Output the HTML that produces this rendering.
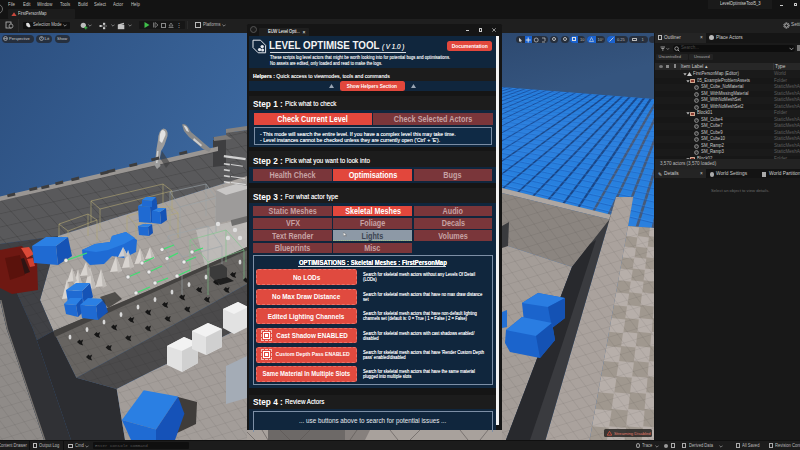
<!DOCTYPE html>
<html><head><meta charset="utf-8">
<style>
*{margin:0;padding:0;box-sizing:border-box}
html,body{width:800px;height:450px;overflow:hidden;background:#111;font-family:"Liberation Sans",sans-serif;color:#ddd}
.a{position:absolute}
.t{position:absolute;white-space:nowrap;line-height:1}
.mn{position:absolute;top:1.6px;font-size:4.7px;color:#c4c4c4;line-height:5px;transform:scaleX(.92);transform-origin:0 50%}
.pill{position:absolute;height:8px;border-radius:4px;background:rgba(36,40,48,0.82);font-size:4.5px;color:#ddd;line-height:8px}
.ot{position:absolute;font-size:4.8px;line-height:6px;color:#c8c8c8;white-space:nowrap;transform:scaleX(.9);transform-origin:0 50%}
.ty{position:absolute;left:774px;font-size:4.6px;line-height:6px;color:#5e5e5e;white-space:nowrap}
.ico{position:absolute;width:4px;height:4px;border-radius:50%;border:0.8px solid #aaa}
.sec{position:absolute;left:249px;width:247px;background:#1c1c1c}
.nav{position:absolute;left:250px;width:246px;background:#10263d}
.st{position:absolute;left:253px;font-size:9px;font-weight:bold;color:#fff;line-height:10px;white-space:nowrap}
.st span{font-size:5.6px;font-weight:normal;color:#e8e8e8}
.b{position:absolute;height:11px;font-size:6.2px;font-weight:bold;text-align:center;line-height:11px;color:#b48a8c;background:#7a363a;white-space:nowrap}
.on{background:#e2473c;color:#fff}
.ob{position:absolute;left:256px;width:101px;height:16px;border-radius:2.5px;background:#e04a3f;color:#fff;font-size:6.1px;font-weight:bold;text-align:center;line-height:16px;white-space:nowrap;outline:0.6px dashed rgba(255,180,170,0.35);outline-offset:-1px}
.od{position:absolute;left:363px;font-size:4.3px;line-height:5.2px;color:#d8dde4;white-space:nowrap}
</style></head><body>

<!-- ===== top chrome ===== -->
<div class="a" style="left:0;top:0;width:800px;height:18.5px;background:#131313"></div>
<div class="a" style="left:-7px;top:4px;width:10px;height:10px;border-radius:50%;border:0.9px solid #6e6e6e"></div>
<div class="mn" style="left:8px">File</div>
<div class="mn" style="left:22.5px">Edit</div>
<div class="mn" style="left:37px">Window</div>
<div class="mn" style="left:59.5px">Tools</div>
<div class="mn" style="left:78px">Build</div>
<div class="mn" style="left:94px">Select</div>
<div class="mn" style="left:113px">Actor</div>
<div class="mn" style="left:131px">Help</div>
<div class="a" style="left:8px;top:8.5px;width:67px;height:10px;background:#1c1c1c;border-radius:1px"></div>
<svg class="a" style="left:10.5px;top:11.8px" width="6" height="4.5"><polygon points="3,0.3 5.6,4 0.4,4" fill="#c8483c"/></svg>
<div class="t" style="left:18px;top:12px;font-size:4.6px;color:#d4d4d4;transform:scaleX(.88);transform-origin:0 50%">FirstPersonMap</div>
<div class="a" style="left:708px;top:0;width:64px;height:8.5px;background:#1a1a1a"></div>
<div class="t" style="left:720px;top:2.3px;font-size:4.7px;color:#d8d8d8;transform:scaleX(.88);transform-origin:0 50%">LevelOptimiseTool5_3</div>
<div class="a" style="left:780px;top:4.5px;width:3px;height:0.8px;background:#ccc"></div>
<div class="a" style="left:793.5px;top:2.8px;width:3.5px;height:3.5px;border:0.7px solid #ccc;border-radius:0.6px"></div>
<!-- toolbar -->
<div class="a" style="left:0;top:18.5px;width:800px;height:14px;background:#1f1f1f"></div>
<svg class="a" style="left:5px;top:21px" width="9" height="8"><rect x="1" y="1" width="5" height="6" fill="none" stroke="#bbb" stroke-width="0.8"/><circle cx="6" cy="5" r="2" fill="#1f1f1f" stroke="#bbb" stroke-width="0.7"/></svg><div class="a" style="left:18px;top:19px;width:0.8px;height:13px;background:#2a2a2a"></div>
<div class="a" style="left:23px;top:21.5px;width:47px;height:7.5px;background:#101010;border-radius:1px"></div>
<svg class="a" style="left:24.5px;top:22.2px" width="6" height="6"><path d="M1 1.5Q3 0 4.5 2L5.5 4.5L4 5.5L1.5 4Z" fill="#e0e0e0"/></svg>
<div class="t" style="left:32.5px;top:23.2px;font-size:4.6px;color:#ccc;transform:scaleX(.9);transform-origin:0 50%">Selection Mode</div><svg class="a" style="left:63px;top:24px" width="4" height="3"><path d="M0.4 0.6L2 2.2L3.6 0.6" stroke="#ccc" stroke-width="0.6" fill="none"/></svg>
<svg class="a" style="left:79.5px;top:21.5px" width="8" height="8"><circle cx="3.3" cy="3.3" r="2.6" fill="#bdbdbd"/><path d="M5.8 4.2V7.4M4.2 5.8H7.4" stroke="#3fbf4a" stroke-width="1"/></svg>
<svg class="a" style="left:88px;top:24px" width="4" height="3"><path d="M0.4 0.6L2 2.2L3.6 0.6" stroke="#bbb" stroke-width="0.6" fill="none"/></svg>
<svg class="a" style="left:98.5px;top:21.5px" width="10" height="8"><rect x="0.5" y="3" width="2.2" height="2" fill="#ccc"/><rect x="4" y="0.8" width="2.2" height="2" fill="#ccc"/><rect x="4" y="5.2" width="2.2" height="2" fill="#ccc"/><path d="M2.7 4H4M5.1 2.8V5.2M6.2 4H8" stroke="#ccc" stroke-width="0.6"/></svg>
<svg class="a" style="left:111px;top:24px" width="4" height="3"><path d="M0.4 0.6L2 2.2L3.6 0.6" stroke="#bbb" stroke-width="0.6" fill="none"/></svg>
<svg class="a" style="left:116.5px;top:21.5px" width="9" height="8"><rect x="0.8" y="3" width="6.5" height="4.2" fill="#c4c4c4"/><path d="M0.8 2.6L6.8 0.8L7.2 2.2L1.2 3.8Z" fill="#c4c4c4"/></svg>
<svg class="a" style="left:128px;top:24px" width="4" height="3"><path d="M0.4 0.6L2 2.2L3.6 0.6" stroke="#bbb" stroke-width="0.6" fill="none"/></svg>
<div class="a" style="left:139px;top:21px;width:46px;height:8px;background:#161616;border-radius:1px"></div>
<svg class="a" style="left:144px;top:22px" width="6" height="6"><polygon points="0.5,0 5.5,3 0.5,6" fill="#3fbf4a"/></svg>
<svg class="a" style="left:153px;top:22px" width="6" height="6"><path d="M0.5 0.5V5.5M2 0.5L5 3L2 5.5Z" fill="none" stroke="#888" stroke-width="0.8"/></svg>
<div class="a" style="left:161px;top:22.5px;width:4.5px;height:5px;border:0.8px solid #888"></div>
<svg class="a" style="left:168px;top:22px" width="6" height="6"><path d="M0.5 5.5H5.5M1 4L3 1L5 4Z" fill="none" stroke="#888" stroke-width="0.8"/></svg>
<div class="t" style="left:176px;top:21.5px;font-size:6px;color:#aaa;line-height:7px">⋮</div>
<div class="a" style="left:187px;top:21px;width:1px;height:8px;background:#2a2a2a"></div>
<div class="a" style="left:195px;top:22px;width:6px;height:6px;border:0.9px solid #bbb"></div>
<div class="t" style="left:203px;top:23.2px;font-size:4.6px;color:#bbb;transform:scaleX(.9);transform-origin:0 50%">Platforms</div><svg class="a" style="left:222px;top:24px" width="4" height="3"><path d="M0.4 0.6L2 2.2L3.6 0.6" stroke="#bbb" stroke-width="0.6" fill="none"/></svg>
<svg class="a" style="left:782.5px;top:22px" width="7" height="7"><circle cx="3.5" cy="3.5" r="1.8" fill="none" stroke="#ccc" stroke-width="0.9"/><circle cx="3.5" cy="3.5" r="2.8" fill="none" stroke="#ccc" stroke-width="0.8" stroke-dasharray="1 0.8"/></svg>
<div class="t" style="left:791px;top:23.2px;font-size:4.7px;color:#bbb">Settings</div>

<svg class="a" style="left:0;top:33px" width="655" height="407" viewBox="0 33 655 407">
<defs>
<linearGradient id="sky" gradientUnits="userSpaceOnUse" x1="0" y1="40" x2="260" y2="200">
<stop offset="0" stop-color="#2c4f7f"/><stop offset="1" stop-color="#3f6ca4"/>
</linearGradient>
<linearGradient id="sky2" gradientUnits="userSpaceOnUse" x1="502" y1="33" x2="520" y2="100">
<stop offset="0" stop-color="#2d4970"/><stop offset="1" stop-color="#35557f"/>
</linearGradient>
<pattern id="grid" width="10" height="10" patternUnits="userSpaceOnUse" patternTransform="rotate(-17) skewX(20)">
<path d="M0 0H10M0 0V10" stroke="#000" stroke-opacity="0.16" stroke-width="0.7" fill="none"/>
</pattern>
<pattern id="cubes" width="9" height="7" patternUnits="userSpaceOnUse" patternTransform="rotate(8) skewX(-30)">
<rect width="9" height="7" fill="#1b55a8"/>
<rect x="0.5" y="0.5" width="7.5" height="4.5" fill="#2d7fe0"/>
<rect x="0.5" y="4.2" width="7.5" height="1.8" fill="#1d63c4"/>
</pattern>
<pattern id="wgrid" width="14.5" height="13" patternUnits="userSpaceOnUse" patternTransform="translate(0,200) rotate(-12.6) skewX(30)">
<path d="M0 0.5H14.5M0.5 0V13" stroke="#2e2e30" stroke-opacity="0.38" stroke-width="0.7" fill="none"/>
</pattern>
</defs>
<rect x="0" y="33" width="655" height="407" fill="url(#sky)"/>
<rect x="502" y="33" width="153" height="120" fill="url(#sky2)"/>
<!-- LEFT SECTION -->
<!-- far wall face -->
<polygon points="0,199 218,149 213,137 229,141 226,131 247,133 247,176 219,185 175,199 58,236 0,244" fill="#59595b"/>
<polygon points="0,199 218,149 213,137 229,141 226,131 247,133 247,176 219,185 175,199 58,236 0,244" fill="url(#wgrid)"/>
<polygon points="213,140 231,138 231,165 213,167" fill="#3e3e40"/>
<polygon points="226,133 247,130 247,196 226,190" fill="#5a5a5c"/><polygon points="226,133 247,130 247,196 226,190" fill="url(#wgrid)"/>
<polygon points="214,137 226,135 232,139 214,141" fill="#7d7a78"/>
<polygon points="226,129 247,126 247,130 226,133" fill="#85827f"/>
<!-- wall top ledge -->
<polygon points="0,196.4 218,146.4 218,151 0,201" fill="#9a9693"/>
<!-- floor light -->
<polygon points="58,236 175,199 219,185 247,176 247,249 150,292 53.3,331 40,300" fill="#a8a39f"/>
<polygon points="58,236 175,199 219,185 247,176 247,249 150,292 53.3,331 40,300" fill="url(#grid)"/>
<polygon points="196,230 247,218 247,249 205,266" fill="#c2bfbd" opacity="0.8"/><polygon points="229,213 247,208 247,222 232,226" fill="#6f6e6d"/>
<!-- left shadow floor -->
<polygon points="0,244 58,236 40,300 53.3,331 37,340 33,329 13,284 0,284" fill="#404145"/>
<polygon points="0,244 58,236 40,300 53.3,331 37,340 33,329 13,284 0,284" fill="url(#grid)"/>
<!-- bottom-left light floor -->
<polygon points="0,300 6.7,329 44,440 0,440" fill="#8f8b88"/>
<polygon points="0,300 6.7,329 44,440 0,440" fill="url(#grid)"/>
<!-- left wall band -->
<polygon points="0,284 13,284 33,329 71,440 44,440 6.7,329 0,300" fill="#303135"/>
<polygon points="0,300 1.5,300 8,329 45.5,440 44,440 6.7,329" fill="#77736f"/>
<!-- deep shadow -->
<polygon points="37,340 53.3,331 76.4,377.7 116.7,388.9 125,440 71,440 33,329" fill="#2c2d31"/>
<!-- platform top -->
<polygon points="53.3,331 150,290 247,247 247,284 150,338 76.4,377.7" fill="#676461"/>
<polygon points="53.3,331 150,290 247,247 247,284 150,338 76.4,377.7" fill="url(#grid)"/>
<polygon points="53.3,331 150,290 247,247 247,250.5 150,294 55,337" fill="#444240"/>
<!-- platform front face -->
<polygon points="76.4,377.7 150,338 247,284 247,325 150,372 130,382 116.7,388.9" fill="#4b4a4b"/>
<polygon points="76.4,377.7 150,338 247,284 247,325 150,372 130,382 116.7,388.9" fill="url(#grid)"/>
<!-- floor right of platform -->
<polygon points="116.7,388.9 150,372 247,325 247,440 125,440" fill="#a39d99"/>
<polygon points="116.7,388.9 150,372 247,325 247,440 125,440" fill="url(#grid)"/>

<!-- white cubes -->
<polygon points="167,346 184,337 198,343 198,363 182,372 167,365" fill="#e2e2e2"/>
<polygon points="167,346 184,337 198,343 182,351" fill="#f2f2f2"/>
<polygon points="182,351 198,343 198,363 182,372" fill="#d0d0d0"/>
<polygon points="192,331 208,323 222,329 222,347 206,355 192,349" fill="#e2e2e2"/>
<polygon points="192,331 208,323 222,329 206,337" fill="#f2f2f2"/>
<polygon points="206,337 222,329 222,347 206,355" fill="#d0d0d0"/>
<polygon points="223,309 238,302 248,307 248,327 234,334 223,328" fill="#e2e2e2"/>
<polygon points="223,309 238,302 248,307 234,314" fill="#f2f2f2"/>
<!-- big blue cube bottom -->
<polygon points="178,397 197,402 196,424 175,434" fill="#3f3c3a"/>
<polygon points="121.9,420 143.75,390.3 178,396.6 156,429.4" fill="#2a7fe3"/>
<polygon points="121.9,420 156,429.4 156,440 131,440" fill="#1f6bd3"/>
<polygon points="156,429.4 178,396.6 184.4,413.75 175,440 156,440" fill="#1552b8"/>
<polygon points="0,250 22,246 37,262 38,290 12,294 0,288" fill="#6e1812"/>
<polygon points="8,262 24,258 30,272 14,278" fill="#1e1414" opacity="0.8"/>
<polygon points="5,258 20,255 25,275 10,280" fill="#5a120c"/>
<polygon points="21,248 29,247 34,254 27,258" fill="#dc4a38"/>
<polygon points="27,259 33,258 35,266 30,267" fill="#d04030"/>
<path d="M59 224L88 214L97 220L68 231Z M59 224V246 M88 214V236 M97 220V241 M68 231V253" stroke="#b3a874" stroke-width="0.6" fill="none"/>
<path d="M91 201L163 184L172 191L100 209Z M91 201V222 M163 184V205 M172 191V212 M100 209V231" stroke="#b3a874" stroke-width="0.6" fill="none"/>
<path d="M127 216L170 206L178 213L136 224Z M127 216V240 M170 206V230 M178 213V238 M136 224V250" stroke="#b3a874" stroke-width="0.6" fill="none"/>
<path d="M170 192L206 184L216 198L180 207Z M170 192V226 M206 184V216 M216 198V232 M180 207V240" stroke="#9aa4aa" stroke-width="0.6" fill="none"/>
<path d="M168 236L208 226L222 246L182 257Z M168 236V272 M208 226V260 M222 246V282 M182 257V295" stroke="#9aa4aa" stroke-width="0.6" fill="none"/>
<path d="M190 240L226 230L244 250L208 262Z M190 240V272 M226 230V262 M244 250V280 M208 262V295" stroke="#78c888" stroke-width="0.6" fill="none"/>
<polygon points="56,246 68,237 72,256 58,265" fill="#1553b6"/>
<polygon points="32,246 56,246 58,265 34,263" fill="#1f6ad2"/>
<polygon points="32,246 46,237 68,237 56,246" fill="#2b80e4"/>
<polygon points="82,250 95,244 110,242 112,236 126,232 137,240 136,252 124,258 112,256 104,264 90,265 83,258" fill="#1f6bd4"/>
<polygon points="82,250 95,244 110,242 112,236 126,232 135,238 124,244 108,250 96,252" fill="#2a7fe3"/>
<polygon points="150,207 157,202 158,218 151,223" fill="#1553b6"/>
<polygon points="138,206 150,207 151,223 139,222" fill="#1f6ad2"/>
<polygon points="138,206 146,201 157,202 150,207" fill="#2b80e4"/>
<polygon points="152,201 156,197 157,202 152,207" fill="#1553b6"/>
<polygon points="142,200 152,201 152,207 142,206" fill="#1f6ad2"/>
<polygon points="142,200 146,197 156,197 152,201" fill="#2b80e4"/>
<polygon points="160,212 166,208 167,220 161,224" fill="#1553b6"/>
<polygon points="152,211 160,212 161,224 152,223" fill="#1f6ad2"/>
<polygon points="152,211 158,208 166,208 160,212" fill="#2b80e4"/>
<polygon points="148,227 152,224 153,233 149,236" fill="#1553b6"/>
<polygon points="138,226 148,227 149,236 139,235" fill="#1f6ad2"/>
<polygon points="138,226 143,224 152,224 148,227" fill="#2b80e4"/>
<polygon points="62.0,299.0 67.0,279.0 72.0,298.0" fill="#dcd8d4" opacity="0.92"/>
<polygon points="67.0,279.0 72.0,298.0 68.5,300.0" fill="#bdb8b4" opacity="0.9"/>
<polygon points="72.0,293.0 78.0,269.0 84.0,292.0" fill="#dcd8d4" opacity="0.92"/>
<polygon points="78.0,269.0 84.0,292.0 79.8,294.0" fill="#bdb8b4" opacity="0.9"/>
<polygon points="84.0,289.0 90.0,267.0 96.0,288.0" fill="#dcd8d4" opacity="0.92"/>
<polygon points="90.0,267.0 96.0,288.0 91.8,290.0" fill="#bdb8b4" opacity="0.9"/>
<polygon points="95.5,287.0 101.0,269.0 106.5,286.0" fill="#dcd8d4" opacity="0.92"/>
<polygon points="101.0,269.0 106.5,286.0 102.7,288.0" fill="#bdb8b4" opacity="0.9"/>
<polygon points="67.0,282.0 72.0,268.0 77.0,281.0" fill="#dcd8d4" opacity="0.92"/>
<polygon points="72.0,268.0 77.0,281.0 73.5,283.0" fill="#bdb8b4" opacity="0.9"/>
<polygon points="80.0,276.0 86.0,262.0 92.0,275.0" fill="#dcd8d4" opacity="0.92"/>
<polygon points="86.0,262.0 92.0,275.0 87.8,277.0" fill="#bdb8b4" opacity="0.9"/>
<polygon points="110.0,272.0 116.0,256.0 122.0,271.0" fill="#dcd8d4" opacity="0.92"/>
<polygon points="116.0,256.0 122.0,271.0 117.8,273.0" fill="#bdb8b4" opacity="0.9"/>
<polygon points="122.0,268.0 128.0,250.0 134.0,267.0" fill="#dcd8d4" opacity="0.92"/>
<polygon points="128.0,250.0 134.0,267.0 129.8,269.0" fill="#bdb8b4" opacity="0.9"/>
<polygon points="134.5,264.0 140.0,248.0 145.5,263.0" fill="#dcd8d4" opacity="0.92"/>
<polygon points="140.0,248.0 145.5,263.0 141.7,265.0" fill="#bdb8b4" opacity="0.9"/>
<polygon points="145.0,259.0 150.0,247.0 155.0,258.0" fill="#dcd8d4" opacity="0.92"/>
<polygon points="150.0,247.0 155.0,258.0 151.5,260.0" fill="#bdb8b4" opacity="0.9"/>
<polygon points="118.0,257.0 123.0,247.0 128.0,256.0" fill="#dcd8d4" opacity="0.92"/>
<polygon points="123.0,247.0 128.0,256.0 124.5,258.0" fill="#bdb8b4" opacity="0.9"/>
<polygon points="82,291 90,283 93,297 84,306" fill="#1553b6"/>
<polygon points="66,290 82,291 84,306 68,303" fill="#1f6ad2"/>
<polygon points="66,290 76,283 90,283 82,291" fill="#2b80e4"/>
<polygon points="76,305 82,298 84,311 78,317" fill="#1553b6"/>
<polygon points="64,304 76,305 78,317 66,314" fill="#1f6ad2"/>
<polygon points="64,304 70,298 82,298 76,305" fill="#2b80e4"/>
<polygon points="96,306 104,299 108,312 98,320" fill="#1553b6"/>
<polygon points="80,305 96,306 98,320 82,318" fill="#1f6ad2"/>
<polygon points="80,305 88,298 104,299 96,306" fill="#2b80e4"/>
<polygon points="100,297 115,292 122,299 108,308" fill="#3a3836" opacity="0.8"/>
<line x1="66" y1="260.5" x2="87" y2="253" stroke="#3ee070" stroke-width="1.3"/>
<circle cx="66" cy="260.5" r="2" fill="#ececec" stroke="#777" stroke-width="0.4"/>
<line x1="142" y1="263" x2="154" y2="257.5" stroke="#3ee070" stroke-width="1.3"/>
<circle cx="142" cy="263" r="2" fill="#ececec" stroke="#777" stroke-width="0.4"/>
<line x1="162" y1="249.6" x2="174" y2="245" stroke="#3ee070" stroke-width="1.3"/>
<circle cx="162" cy="249.6" r="2" fill="#ececec" stroke="#777" stroke-width="0.4"/>
<line x1="167" y1="258.4" x2="178" y2="253" stroke="#3ee070" stroke-width="1.3"/>
<circle cx="167" cy="258.4" r="2" fill="#ececec" stroke="#777" stroke-width="0.4"/>
<line x1="128" y1="277" x2="140" y2="272" stroke="#3ee070" stroke-width="1.3"/>
<circle cx="128" cy="277" r="2" fill="#ececec" stroke="#777" stroke-width="0.4"/>
<line x1="149" y1="272" x2="162" y2="266" stroke="#3ee070" stroke-width="1.3"/>
<circle cx="149" cy="272" r="2" fill="#ececec" stroke="#777" stroke-width="0.4"/>
<line x1="155" y1="283" x2="168" y2="278" stroke="#3ee070" stroke-width="1.3"/>
<circle cx="155" cy="283" r="2" fill="#ececec" stroke="#777" stroke-width="0.4"/>
<line x1="177" y1="276" x2="190" y2="270" stroke="#3ee070" stroke-width="1.3"/>
<circle cx="177" cy="276" r="2" fill="#ececec" stroke="#777" stroke-width="0.4"/>
<line x1="184" y1="262" x2="196" y2="257" stroke="#3ee070" stroke-width="1.3"/>
<circle cx="184" cy="262" r="2" fill="#ececec" stroke="#777" stroke-width="0.4"/>
<line x1="192" y1="252" x2="203" y2="248" stroke="#3ee070" stroke-width="1.3"/>
<circle cx="192" cy="252" r="2" fill="#ececec" stroke="#777" stroke-width="0.4"/>
<line x1="136" y1="293" x2="150" y2="287" stroke="#3ee070" stroke-width="1.3"/>
<circle cx="136" cy="293" r="2" fill="#ececec" stroke="#777" stroke-width="0.4"/>
<ellipse cx="70.0" cy="337.0" rx="1.4" ry="2.6" fill="#d8d8d8"/>
<path d="M77.0 342.0l2.5 -2.5l1.2 1.2l2.5 -1.2l-1.2 3.5l1.2 2.5l-3.7 -1.2z" fill="#151515"/>
<ellipse cx="87.0" cy="329.5" rx="1.4" ry="2.6" fill="#d8d8d8"/>
<path d="M94.0 334.5l2.5 -2.5l1.2 1.2l2.5 -1.2l-1.2 3.5l1.2 2.5l-3.7 -1.2z" fill="#151515"/>
<ellipse cx="104.0" cy="322.0" rx="1.4" ry="2.6" fill="#d8d8d8"/>
<path d="M111.0 327.0l2.5 -2.5l1.2 1.2l2.5 -1.2l-1.2 3.5l1.2 2.5l-3.7 -1.2z" fill="#151515"/>
<ellipse cx="121.0" cy="314.5" rx="1.4" ry="2.6" fill="#d8d8d8"/>
<path d="M128.0 319.5l2.5 -2.5l1.2 1.2l2.5 -1.2l-1.2 3.5l1.2 2.5l-3.7 -1.2z" fill="#151515"/>
<ellipse cx="138.0" cy="307.0" rx="1.4" ry="2.6" fill="#d8d8d8"/>
<path d="M145.0 312.0l2.5 -2.5l1.2 1.2l2.5 -1.2l-1.2 3.5l1.2 2.5l-3.7 -1.2z" fill="#151515"/>
<ellipse cx="155.0" cy="299.5" rx="1.4" ry="2.6" fill="#d8d8d8"/>
<path d="M162.0 304.5l2.5 -2.5l1.2 1.2l2.5 -1.2l-1.2 3.5l1.2 2.5l-3.7 -1.2z" fill="#151515"/>
<ellipse cx="172.0" cy="292.0" rx="1.4" ry="2.6" fill="#d8d8d8"/>
<path d="M179.0 297.0l2.5 -2.5l1.2 1.2l2.5 -1.2l-1.2 3.5l1.2 2.5l-3.7 -1.2z" fill="#151515"/>
<ellipse cx="189.0" cy="284.5" rx="1.4" ry="2.6" fill="#d8d8d8"/>
<path d="M196.0 289.5l2.5 -2.5l1.2 1.2l2.5 -1.2l-1.2 3.5l1.2 2.5l-3.7 -1.2z" fill="#151515"/>
<ellipse cx="206.0" cy="277.0" rx="1.4" ry="2.6" fill="#d8d8d8"/>
<path d="M213.0 282.0l2.5 -2.5l1.2 1.2l2.5 -1.2l-1.2 3.5l1.2 2.5l-3.7 -1.2z" fill="#151515"/>
<ellipse cx="223.0" cy="269.5" rx="1.4" ry="2.6" fill="#d8d8d8"/>
<path d="M230.0 274.5l2.5 -2.5l1.2 1.2l2.5 -1.2l-1.2 3.5l1.2 2.5l-3.7 -1.2z" fill="#151515"/>
<ellipse cx="240.0" cy="262.0" rx="1.4" ry="2.6" fill="#d8d8d8"/>
<path d="M247.0 267.0l2.5 -2.5l1.2 1.2l2.5 -1.2l-1.2 3.5l1.2 2.5l-3.7 -1.2z" fill="#151515"/>
<path d="M86.0 357.0l2.5 -2.5l1.2 1.2l2.5 -1.2l-1.2 3.5l1.2 2.5l-3.7 -1.2z" fill="#181818"/>
<path d="M105.6 347.4l2.5 -2.5l1.2 1.2l2.5 -1.2l-1.2 3.5l1.2 2.5l-3.7 -1.2z" fill="#181818"/>
<path d="M125.2 337.8l2.5 -2.5l1.2 1.2l2.5 -1.2l-1.2 3.5l1.2 2.5l-3.7 -1.2z" fill="#181818"/>
<path d="M144.9 328.1l2.5 -2.5l1.2 1.2l2.5 -1.2l-1.2 3.5l1.2 2.5l-3.7 -1.2z" fill="#181818"/>
<path d="M164.5 318.5l2.5 -2.5l1.2 1.2l2.5 -1.2l-1.2 3.5l1.2 2.5l-3.7 -1.2z" fill="#181818"/>
<path d="M184.1 308.9l2.5 -2.5l1.2 1.2l2.5 -1.2l-1.2 3.5l1.2 2.5l-3.7 -1.2z" fill="#181818"/>
<path d="M203.8 299.2l2.5 -2.5l1.2 1.2l2.5 -1.2l-1.2 3.5l1.2 2.5l-3.7 -1.2z" fill="#181818"/>
<path d="M223.4 289.6l2.5 -2.5l1.2 1.2l2.5 -1.2l-1.2 3.5l1.2 2.5l-3.7 -1.2z" fill="#181818"/>
<path d="M243.0 280.0l2.5 -2.5l1.2 1.2l2.5 -1.2l-1.2 3.5l1.2 2.5l-3.7 -1.2z" fill="#181818"/>
<polygon points="210,267 222,264 227,268 227,277 214,280 210,276" fill="#3b3b3b"/>
<polygon points="214,280 227,277 234,281 220,285" fill="#1e1e1e"/>
<polygon points="216,190 247,180 247,216 216,224" fill="#9d9b9a"/>
<polygon points="216,190 236,184 247,186 247,189 226,195" fill="#c9c7c6"/>
<rect x="224" y="155" width="22" height="2.2" fill="#e8e8e8" opacity="0.85" transform="rotate(8 224 155)"/>
<rect x="224" y="163" width="6" height="1.6" fill="#e8e8e8" opacity="0.85" transform="rotate(8 224 163)"/>
<rect x="231" y="164" width="12" height="1" fill="#e8e8e8" opacity="0.85" transform="rotate(8 231 164)"/>
<rect x="224" y="169" width="6" height="1.6" fill="#e8e8e8" opacity="0.85" transform="rotate(8 224 169)"/>
<rect x="224" y="175" width="6" height="1.6" fill="#e8e8e8" opacity="0.85" transform="rotate(8 224 175)"/>
<rect x="231" y="176" width="14" height="1" fill="#e8e8e8" opacity="0.85" transform="rotate(8 231 176)"/>
<rect x="224" y="181" width="6" height="1.6" fill="#e8e8e8" opacity="0.85" transform="rotate(8 224 181)"/>
<rect x="231" y="182" width="15" height="1" fill="#e8e8e8" opacity="0.85" transform="rotate(8 231 182)"/>
<polygon points="226,366 247,356 247,398 226,404" fill="#a4acb6"/>
<circle cx="235" cy="230" r="2.2" fill="#e0e0e0"/>
<circle cx="240" cy="238" r="2.2" fill="#e0e0e0"/>
<circle cx="228" cy="238" r="2.2" fill="#e0e0e0"/>
<circle cx="218" cy="224" r="2.2" fill="#e0e0e0"/>
<path d="M163.5 128.5 Q168.5 129.5 167.5 136 L164.5 145 Q162.5 149 161 151 L159.5 161 L160.5 166 L157 169 L154.5 165 L155.5 158 L156.5 149 L158 140 Q158.5 130 163.5 128.5Z" fill="#9c9c9c"/>
<path d="M162 130 Q166 130 165.5 135 L162 143 L159.5 141 Q159.5 132 162 130Z" fill="#e2e2e2"/>
<path d="M157 151 L158.5 151 L157.5 163 L156 163Z" fill="#d0d0d0"/>
<path d="M182 124.5 Q185 123 188 127 L191 132 L197 137 L205 144 L211 149 L209 152 L203 149 L195 142 L189 137 L184 131Z" fill="#8a8a8a"/>
<path d="M183.5 125.5 Q186 125 187.5 128 L189 132 L186.5 131Z" fill="#d8d8d8"/>
<path d="M194 138 L202 145 L201 146.5 L193 140Z" fill="#cfcfcf"/>
<path d="M162 151 L170 163 L166 168 L160 158Z" fill="#3a3a3c" opacity="0.6"/>
<rect x="6" y="194.5" width="8" height="3" fill="#3d3d3e" transform="rotate(-13 6 190)"/>
<rect x="28" y="188.5" width="8" height="3" fill="#3d3d3e" transform="rotate(-13 28 184)"/>
<rect x="40" y="186.5" width="8" height="3" fill="#3d3d3e" transform="rotate(-13 40 182)"/>
<rect x="54" y="182.5" width="8" height="3" fill="#3d3d3e" transform="rotate(-13 54 178)"/>
<rect x="70" y="178.5" width="8" height="3" fill="#3d3d3e" transform="rotate(-13 70 174)"/>
<rect x="99" y="172.5" width="8" height="3" fill="#3d3d3e" transform="rotate(-13 99 168)"/>
<rect x="106" y="170.5" width="8" height="3" fill="#3d3d3e" transform="rotate(-13 106 166)"/>
<rect x="128" y="164.5" width="8" height="3" fill="#3d3d3e" transform="rotate(-13 128 160)"/>
<rect x="150" y="158.5" width="8" height="3" fill="#3d3d3e" transform="rotate(-13 150 154)"/>
<rect x="178" y="152.5" width="8" height="3" fill="#3d3d3e" transform="rotate(-13 178 148)"/>
<!-- under window floor -->
<polygon points="247,250 502,180 502,440 247,440" fill="#a8a19c"/>
<polygon points="268,430 345,430 345,440 268,440" fill="#6d6967"/>
<polygon points="345,430 370,430 365,440 345,440" fill="#86807d"/>
<path d="M247 432L255 440M262 430L268 440M280 430L290 440M300 440L310 430M350 440L357 430M390 430L398 440M410 440L420 430M460 430L468 440M480 440L488 430" stroke="#5a5654" stroke-width="0.6" fill="none"/>
<!-- RIGHT SECTION -->
<clipPath id="fc"><polygon points="502,87 654,99 654,228 628,226 633,197 616,197 612,216 502,188"/></clipPath>
<polygon points="502,87 654,99 654,228 628,226 633,197 616,197 612,216 502,188" fill="#2c80de"/>
<g clip-path="url(#fc)">
<line x1="700" y1="25" x2="648.8" y2="355.7" stroke="#4a5a78" stroke-width="2.80"/>
<line x1="700" y1="25" x2="624.8" y2="349.3" stroke="#4a5a78" stroke-width="2.74"/>
<line x1="700" y1="25" x2="600.8" y2="343.0" stroke="#4a5a78" stroke-width="2.63"/>
<line x1="700" y1="25" x2="576.8" y2="336.7" stroke="#4a5a78" stroke-width="2.51"/>
<line x1="700" y1="25" x2="552.8" y2="330.4" stroke="#4a5a78" stroke-width="2.39"/>
<line x1="700" y1="25" x2="528.8" y2="324.1" stroke="#4a5a78" stroke-width="2.27"/>
<line x1="700" y1="25" x2="504.8" y2="317.8" stroke="#1d4785" stroke-width="2.15"/>
<line x1="700" y1="25" x2="480.8" y2="311.5" stroke="#1d4785" stroke-width="2.03"/>
<line x1="700" y1="25" x2="456.8" y2="305.2" stroke="#1d4785" stroke-width="1.91"/>
<line x1="700" y1="25" x2="432.8" y2="298.8" stroke="#1d4785" stroke-width="1.79"/>
<line x1="700" y1="25" x2="408.8" y2="292.5" stroke="#1d4785" stroke-width="1.68"/>
<line x1="700" y1="25" x2="384.8" y2="286.2" stroke="#1d4785" stroke-width="1.56"/>
<line x1="700" y1="25" x2="360.8" y2="279.9" stroke="#1d4785" stroke-width="1.44"/>
<line x1="700" y1="25" x2="337.7" y2="273.8" stroke="#1d4785" stroke-width="1.32"/>
<line x1="700" y1="25" x2="315.5" y2="268.0" stroke="#1c4f9a" stroke-width="1.21"/>
<line x1="700" y1="25" x2="294.2" y2="262.4" stroke="#1c4f9a" stroke-width="1.11"/>
<line x1="700" y1="25" x2="273.8" y2="257.0" stroke="#1c4f9a" stroke-width="1.01"/>
<line x1="700" y1="25" x2="254.2" y2="251.9" stroke="#1c4f9a" stroke-width="0.91"/>
<line x1="700" y1="25" x2="235.3" y2="246.9" stroke="#1c4f9a" stroke-width="0.90"/>
<line x1="700" y1="25" x2="217.2" y2="242.2" stroke="#1c4f9a" stroke-width="0.90"/>
<line x1="700" y1="25" x2="199.9" y2="237.6" stroke="#1c4f9a" stroke-width="0.90"/>
<line x1="700" y1="25" x2="183.2" y2="233.2" stroke="#1c4f9a" stroke-width="0.90"/>
<line x1="700" y1="25" x2="167.2" y2="229.0" stroke="#1c4f9a" stroke-width="0.90"/>
<line x1="700" y1="25" x2="151.8" y2="225.0" stroke="#1c4f9a" stroke-width="0.90"/>
<line x1="700" y1="25" x2="137.1" y2="221.1" stroke="#1c4f9a" stroke-width="0.90"/>
<line x1="700" y1="25" x2="122.9" y2="217.4" stroke="#1c4f9a" stroke-width="0.90"/>
<line x1="700" y1="25" x2="109.4" y2="213.8" stroke="#1c4f9a" stroke-width="0.90"/>
<line x1="700" y1="25" x2="96.3" y2="210.3" stroke="#1c4f9a" stroke-width="0.90"/>
<line x1="700" y1="25" x2="83.5" y2="207.0" stroke="#1c4f9a" stroke-width="0.90"/>
<line x1="700" y1="25" x2="70.7" y2="203.6" stroke="#1c4f9a" stroke-width="0.90"/>
<line x1="700" y1="25" x2="57.9" y2="200.2" stroke="#1c4f9a" stroke-width="0.90"/>
<line x1="700" y1="25" x2="45.1" y2="196.9" stroke="#1c4f9a" stroke-width="0.90"/>
<line x1="700" y1="25" x2="32.3" y2="193.5" stroke="#1c4f9a" stroke-width="0.90"/>
<line x1="700" y1="25" x2="19.5" y2="190.1" stroke="#1c4f9a" stroke-width="0.90"/>
<line x1="700" y1="25" x2="6.7" y2="186.8" stroke="#1c4f9a" stroke-width="0.90"/>
<line x1="700" y1="25" x2="-6.1" y2="183.4" stroke="#1c4f9a" stroke-width="0.90"/>
<line x1="700" y1="25" x2="-18.9" y2="180.1" stroke="#1c4f9a" stroke-width="0.90"/>
<line x1="700" y1="25" x2="-31.7" y2="176.7" stroke="#1c4f9a" stroke-width="0.90"/>
<line x1="700" y1="25" x2="-44.5" y2="173.3" stroke="#1c4f9a" stroke-width="0.90"/>
<line x1="700" y1="25" x2="-57.3" y2="170.0" stroke="#1c4f9a" stroke-width="0.90"/>
<line x1="700" y1="25" x2="-70.1" y2="166.6" stroke="#1c4f9a" stroke-width="0.90"/>
<line x1="700" y1="25" x2="-82.9" y2="163.2" stroke="#1c4f9a" stroke-width="0.90"/>
<line x1="700" y1="25" x2="-95.7" y2="159.9" stroke="#1c4f9a" stroke-width="0.90"/>
<line x1="700" y1="25" x2="-108.5" y2="156.5" stroke="#1c4f9a" stroke-width="0.90"/>
<line x1="700" y1="25" x2="-121.3" y2="153.1" stroke="#1c4f9a" stroke-width="0.90"/>
<line x1="700" y1="25" x2="-134.1" y2="149.8" stroke="#1c4f9a" stroke-width="0.90"/>
<line x1="700" y1="25" x2="-146.9" y2="146.4" stroke="#1c4f9a" stroke-width="0.90"/>
<line x1="700" y1="25" x2="-159.7" y2="143.0" stroke="#1c4f9a" stroke-width="0.90"/>
<line x1="700" y1="25" x2="-172.5" y2="139.7" stroke="#1c4f9a" stroke-width="0.90"/>
<line x1="490" y1="87.90" x2="660" y2="100.18" stroke="#1d5bb3" stroke-width="0.36" opacity="0.6"/>
<line x1="490" y1="87.29" x2="660" y2="99.58" stroke="#3a90ea" stroke-width="0.30" opacity="0.6"/>
<line x1="490" y1="89.45" x2="660" y2="102.23" stroke="#1d5bb3" stroke-width="0.36" opacity="0.6"/>
<line x1="490" y1="88.84" x2="660" y2="101.61" stroke="#3a90ea" stroke-width="0.31" opacity="0.6"/>
<line x1="490" y1="91.41" x2="660" y2="104.81" stroke="#1d5bb3" stroke-width="0.38" opacity="0.6"/>
<line x1="490" y1="90.78" x2="660" y2="104.18" stroke="#3a90ea" stroke-width="0.32" opacity="0.6"/>
<line x1="490" y1="93.69" x2="660" y2="107.81" stroke="#1d5bb3" stroke-width="0.39" opacity="0.6"/>
<line x1="490" y1="93.05" x2="660" y2="107.17" stroke="#3a90ea" stroke-width="0.33" opacity="0.6"/>
<line x1="490" y1="96.25" x2="660" y2="111.18" stroke="#1d5bb3" stroke-width="0.40" opacity="0.6"/>
<line x1="490" y1="95.59" x2="660" y2="110.53" stroke="#3a90ea" stroke-width="0.34" opacity="0.6"/>
<line x1="490" y1="99.05" x2="660" y2="114.87" stroke="#1d5bb3" stroke-width="0.42" opacity="0.6"/>
<line x1="490" y1="98.38" x2="660" y2="114.19" stroke="#3a90ea" stroke-width="0.35" opacity="0.6"/>
<line x1="490" y1="102.07" x2="660" y2="118.84" stroke="#1d5bb3" stroke-width="0.44" opacity="0.6"/>
<line x1="490" y1="101.38" x2="660" y2="118.15" stroke="#3a90ea" stroke-width="0.36" opacity="0.6"/>
<line x1="490" y1="105.28" x2="660" y2="123.08" stroke="#1d5bb3" stroke-width="0.46" opacity="0.6"/>
<line x1="490" y1="104.58" x2="660" y2="122.37" stroke="#3a90ea" stroke-width="0.37" opacity="0.6"/>
<line x1="490" y1="108.69" x2="660" y2="127.56" stroke="#1d5bb3" stroke-width="0.48" opacity="0.6"/>
<line x1="490" y1="107.96" x2="660" y2="126.83" stroke="#3a90ea" stroke-width="0.39" opacity="0.6"/>
<line x1="490" y1="112.27" x2="660" y2="132.28" stroke="#1d5bb3" stroke-width="0.50" opacity="0.6"/>
<line x1="490" y1="111.52" x2="660" y2="131.53" stroke="#3a90ea" stroke-width="0.40" opacity="0.6"/>
<line x1="490" y1="116.02" x2="660" y2="137.21" stroke="#1d5bb3" stroke-width="0.52" opacity="0.6"/>
<line x1="490" y1="115.24" x2="660" y2="136.44" stroke="#3a90ea" stroke-width="0.41" opacity="0.6"/>
<line x1="490" y1="119.92" x2="660" y2="142.35" stroke="#1d5bb3" stroke-width="0.55" opacity="0.6"/>
<line x1="490" y1="119.12" x2="660" y2="141.55" stroke="#3a90ea" stroke-width="0.43" opacity="0.6"/>
<line x1="490" y1="123.97" x2="660" y2="147.68" stroke="#1d5bb3" stroke-width="0.57" opacity="0.6"/>
<line x1="490" y1="123.15" x2="660" y2="146.86" stroke="#3a90ea" stroke-width="0.45" opacity="0.6"/>
<line x1="490" y1="128.16" x2="660" y2="153.20" stroke="#1d5bb3" stroke-width="0.59" opacity="0.6"/>
<line x1="490" y1="127.32" x2="660" y2="152.36" stroke="#3a90ea" stroke-width="0.46" opacity="0.6"/>
<line x1="490" y1="132.49" x2="660" y2="158.91" stroke="#1d5bb3" stroke-width="0.62" opacity="0.6"/>
<line x1="490" y1="131.62" x2="660" y2="158.04" stroke="#3a90ea" stroke-width="0.48" opacity="0.6"/>
<line x1="490" y1="136.96" x2="660" y2="164.78" stroke="#1d5bb3" stroke-width="0.65" opacity="0.6"/>
<line x1="490" y1="136.06" x2="660" y2="163.89" stroke="#3a90ea" stroke-width="0.50" opacity="0.6"/>
<line x1="490" y1="141.55" x2="660" y2="170.83" stroke="#1d5bb3" stroke-width="0.67" opacity="0.6"/>
<line x1="490" y1="140.62" x2="660" y2="169.90" stroke="#3a90ea" stroke-width="0.52" opacity="0.6"/>
<line x1="490" y1="146.26" x2="660" y2="177.03" stroke="#1d5bb3" stroke-width="0.70" opacity="0.6"/>
<line x1="490" y1="145.31" x2="660" y2="176.08" stroke="#3a90ea" stroke-width="0.53" opacity="0.6"/>
<line x1="490" y1="151.09" x2="660" y2="183.40" stroke="#1d5bb3" stroke-width="0.73" opacity="0.6"/>
<line x1="490" y1="150.11" x2="660" y2="182.42" stroke="#3a90ea" stroke-width="0.55" opacity="0.6"/>
<line x1="490" y1="156.04" x2="660" y2="189.91" stroke="#1d5bb3" stroke-width="0.76" opacity="0.6"/>
<line x1="490" y1="155.03" x2="660" y2="188.90" stroke="#3a90ea" stroke-width="0.57" opacity="0.6"/>
<line x1="490" y1="161.10" x2="660" y2="196.58" stroke="#1d5bb3" stroke-width="0.79" opacity="0.6"/>
<line x1="490" y1="160.06" x2="660" y2="195.54" stroke="#3a90ea" stroke-width="0.59" opacity="0.6"/>
<line x1="490" y1="166.27" x2="660" y2="203.39" stroke="#1d5bb3" stroke-width="0.82" opacity="0.6"/>
<line x1="490" y1="165.20" x2="660" y2="202.32" stroke="#3a90ea" stroke-width="0.61" opacity="0.6"/>
<line x1="490" y1="171.55" x2="660" y2="210.34" stroke="#1d5bb3" stroke-width="0.85" opacity="0.6"/>
<line x1="490" y1="170.45" x2="660" y2="209.24" stroke="#3a90ea" stroke-width="0.63" opacity="0.6"/>
<line x1="490" y1="176.93" x2="660" y2="217.43" stroke="#1d5bb3" stroke-width="0.88" opacity="0.6"/>
<line x1="490" y1="175.80" x2="660" y2="216.29" stroke="#3a90ea" stroke-width="0.66" opacity="0.6"/>
<line x1="490" y1="182.42" x2="660" y2="224.65" stroke="#1d5bb3" stroke-width="0.92" opacity="0.6"/>
<line x1="490" y1="181.25" x2="660" y2="223.48" stroke="#3a90ea" stroke-width="0.68" opacity="0.6"/>
</g>
<polygon points="502,188 612,215 612,220 502,193" fill="#aea7a2"/>
<polygon points="502,193 612,220 572,267 502,244" fill="#8b8580"/>
<polygon points="502,193 612,220 572,267 502,244" fill="url(#grid)"/>
<polygon points="502,244 572,267 506,440 502,440" fill="#a49d98"/>
<polygon points="502,244 572,267 506,440 502,440" fill="url(#grid)"/>
<polygon points="502,226 509,222 508,246 502,248" fill="#3a3b3e"/>
<polygon points="628,226 654,228 654,440 589.6,440" fill="#a0988f"/>
<clipPath id="cc"><polygon points="628,226 654,228 654,440 589.6,440"/></clipPath>
<g clip-path="url(#cc)">
<polygon points="628.1,226.0 639.1,227.5 637.6,237.5 626.3,236.0" fill="#b7afaa"/>
<polygon points="650.1,226.0 661.1,227.5 660.2,237.5 648.9,236.0" fill="#b7afaa"/>
<polygon points="672.1,226.0 683.1,227.5 682.8,237.5 671.5,236.0" fill="#b7afaa"/>
<polygon points="637.6,236.0 648.9,237.5 647.6,247.9 636.0,246.4" fill="#b7afaa"/>
<polygon points="660.2,236.0 671.5,237.5 670.9,247.9 659.2,246.4" fill="#b7afaa"/>
<polygon points="682.8,236.0 694.1,237.5 694.1,247.9 682.5,246.4" fill="#b7afaa"/>
<polygon points="624.4,246.4 636.0,247.9 634.4,258.7 622.5,257.2" fill="#b7afaa"/>
<polygon points="647.6,246.4 659.2,247.9 658.3,258.7 646.3,257.2" fill="#b7afaa"/>
<polygon points="670.9,246.4 682.5,247.9 682.1,258.7 670.2,257.2" fill="#b7afaa"/>
<polygon points="634.4,257.2 646.3,258.7 645.0,270.0 632.7,268.5" fill="#b7afaa"/>
<polygon points="658.3,257.2 670.2,258.7 669.5,270.0 657.3,268.5" fill="#b7afaa"/>
<polygon points="682.1,257.2 694.1,258.7 694.1,270.0 681.8,268.5" fill="#b7afaa"/>
<polygon points="620.4,268.5 632.7,270.0 631.0,281.7 618.3,280.2" fill="#b7afaa"/>
<polygon points="645.0,268.5 657.3,270.0 656.2,281.7 643.6,280.2" fill="#b7afaa"/>
<polygon points="669.5,268.5 681.8,270.0 681.5,281.7 668.8,280.2" fill="#b7afaa"/>
<polygon points="631.0,280.2 643.6,281.7 642.1,293.8 629.1,292.3" fill="#b7afaa"/>
<polygon points="656.2,280.2 668.8,281.7 668.1,293.8 655.1,292.3" fill="#b7afaa"/>
<polygon points="681.5,280.2 694.1,281.7 694.1,293.8 681.1,292.3" fill="#b7afaa"/>
<polygon points="616.1,292.3 629.1,293.8 627.2,306.5 613.9,305.0" fill="#b7afaa"/>
<polygon points="642.1,292.3 655.1,293.8 654.0,306.5 640.6,305.0" fill="#b7afaa"/>
<polygon points="668.1,292.3 681.1,293.8 680.7,306.5 667.3,305.0" fill="#b7afaa"/>
<polygon points="627.2,305.0 640.6,306.5 639.0,319.6 625.3,318.1" fill="#b7afaa"/>
<polygon points="654.0,305.0 667.3,306.5 666.6,319.6 652.8,318.1" fill="#b7afaa"/>
<polygon points="680.7,305.0 694.1,306.5 694.1,319.6 680.3,318.1" fill="#b7afaa"/>
<polygon points="611.5,318.1 625.3,319.6 623.2,333.3 609.0,331.8" fill="#b7afaa"/>
<polygon points="639.0,318.1 652.8,319.6 651.6,333.3 637.4,331.8" fill="#b7afaa"/>
<polygon points="666.6,318.1 680.3,319.6 679.9,333.3 665.7,331.8" fill="#b7afaa"/>
<polygon points="623.2,331.8 637.4,333.3 635.7,347.6 621.1,346.1" fill="#b7afaa"/>
<polygon points="651.6,331.8 665.7,333.3 664.9,347.6 650.3,346.1" fill="#b7afaa"/>
<polygon points="679.9,331.8 694.1,333.3 694.1,347.6 679.5,346.1" fill="#b7afaa"/>
<polygon points="606.5,346.1 621.1,347.6 618.9,362.4 603.8,360.9" fill="#b7afaa"/>
<polygon points="635.7,346.1 650.3,347.6 648.9,362.4 633.9,360.9" fill="#b7afaa"/>
<polygon points="664.9,346.1 679.5,347.6 679.0,362.4 664.0,360.9" fill="#b7afaa"/>
<polygon points="618.9,360.9 633.9,362.4 632.0,377.8 616.5,376.3" fill="#b7afaa"/>
<polygon points="648.9,360.9 664.0,362.4 663.1,377.8 647.6,376.3" fill="#b7afaa"/>
<polygon points="679.0,360.9 694.1,362.4 694.1,377.8 678.6,376.3" fill="#b7afaa"/>
<polygon points="601.0,376.3 616.5,377.8 614.1,393.8 598.2,392.3" fill="#b7afaa"/>
<polygon points="632.0,376.3 647.6,377.8 646.1,393.8 630.1,392.3" fill="#b7afaa"/>
<polygon points="663.1,376.3 678.6,377.8 678.1,393.8 662.1,392.3" fill="#b7afaa"/>
<polygon points="614.1,392.3 630.1,393.8 628.1,410.4 611.6,408.9" fill="#b7afaa"/>
<polygon points="646.1,392.3 662.1,393.8 661.1,410.4 644.6,408.9" fill="#b7afaa"/>
<polygon points="678.1,392.3 694.1,393.8 694.1,410.4 677.6,408.9" fill="#b7afaa"/>
<polygon points="595.2,408.9 611.6,410.4 609.0,427.7 592.0,426.2" fill="#b7afaa"/>
<polygon points="628.1,408.9 644.6,410.4 643.1,427.7 626.1,426.2" fill="#b7afaa"/>
<polygon points="661.1,408.9 677.6,410.4 677.1,427.7 660.1,426.2" fill="#b7afaa"/>
<polygon points="609.0,426.2 626.1,427.7 623.9,445.7 606.3,444.2" fill="#b7afaa"/>
<polygon points="643.1,426.2 660.1,427.7 659.0,445.7 641.4,444.2" fill="#b7afaa"/>
<polygon points="677.1,426.2 694.1,427.7 694.1,445.7 676.5,444.2" fill="#b7afaa"/>
<polygon points="588.8,444.2 606.3,445.7 603.5,464.5 585.4,463.0" fill="#b7afaa"/>
<polygon points="623.9,444.2 641.4,445.7 639.8,464.5 621.6,463.0" fill="#b7afaa"/>
<polygon points="659.0,444.2 676.5,445.7 676.0,464.5 657.9,463.0" fill="#b7afaa"/>
</g>
<polygon points="628,226 654,228 654,440 589.6,440" fill="url(#grid)"/>
<polygon points="616,197 633.3,197 589.6,440 545.5,440" fill="#aaa29d"/>
<polygon points="616,197 633.3,197 589.6,440 545.5,440" fill="url(#grid)"/>
<polygon points="616,197 545.5,440 506,440 572,267 609,220" fill="#3a3b3f"/>
<polygon points="572,267 590,244 596,240 562,345 530,440 506,440" fill="#28292d"/>
<polygon points="522,303 538,293 565,298 565,318 552,328 524,322" fill="#1b64cc"/>
<polygon points="522,303 538,293 565,298 548,307" fill="#2a7de2"/>
<polygon points="548,307 565,298 565,318 552,328" fill="#1452b4"/>
<polygon points="506,330 522,317 552,323 555,340 540,358 510,352 505,343" fill="#1b64cc"/>
<polygon points="506,330 522,317 552,323 536,336" fill="#2a7de2"/>
<polygon points="536,336 552,323 555,340 540,358" fill="#1452b4"/>
<polygon points="502,312 507,310 507,327 502,328" fill="#2470d4"/>
</svg>

<!-- viewport overlays -->
<div class="pill" style="left:1.5px;top:34.5px;width:32px"></div>
<svg class="a" style="left:3.2px;top:36.3px" width="5" height="5"><circle cx="2.5" cy="2.5" r="1.9" fill="none" stroke="#c8c8c8" stroke-width="0.7"/><path d="M0.8 2.5H4.2" stroke="#c8c8c8" stroke-width="0.6"/></svg>
<div class="t" style="left:9px;top:36.6px;font-size:4.4px;color:#cfcfcf;transform:scaleX(.9);transform-origin:0 50%">Perspective</div>
<div class="pill" style="left:36px;top:34.5px;width:16px"></div>
<svg class="a" style="left:38.5px;top:36.3px" width="5" height="5"><circle cx="2.5" cy="2.5" r="1.9" fill="none" stroke="#c8c8c8" stroke-width="0.7"/><path d="M2.5 1.2V2.7" stroke="#c8c8c8" stroke-width="0.6"/></svg>
<div class="t" style="left:44.5px;top:36.6px;font-size:4.4px;color:#cfcfcf">Lit</div>
<div class="pill" style="left:55px;top:34.5px;width:15px"></div>
<div class="t" style="left:57.3px;top:36.6px;font-size:4.4px;color:#cfcfcf;transform:scaleX(.92);transform-origin:0 50%">Show</div>
<!-- right viewport toolbar -->
<div class="pill" style="left:516px;top:35.5px;width:32px;height:7.5px"></div>
<div class="a" style="left:524.5px;top:35.5px;width:7.5px;height:7.5px;background:#1b63d0"></div>
<svg class="a" style="left:516px;top:35.5px" width="32" height="8" viewBox="0 0 32 8">
<path d="M3 1.8L3 6L4 5L5 6.5L5.6 6.2L4.8 4.8L6.2 4.8Z" fill="#cfcfcf"/>
<path d="M12.2 1.5V6.5M9.7 4H14.7" stroke="#e8e8e8" stroke-width="0.9"/>
<circle cx="20.2" cy="4" r="2" fill="none" stroke="#cfcfcf" stroke-width="0.7"/>
<path d="M26 2H29V5M26 6H29" stroke="#cfcfcf" stroke-width="0.7" fill="none"/>
</svg>
<div class="pill" style="left:549.5px;top:35.5px;width:8px;height:7.5px"></div>
<div class="a" style="left:551.5px;top:37.3px;width:4px;height:4px;border-radius:50%;border:0.7px solid #bbb"></div>
<div class="pill" style="left:560.5px;top:35.5px;width:8px;height:7.5px"></div>
<div class="a" style="left:562.5px;top:37.3px;width:4px;height:4px;border-radius:50%;border:0.7px solid #bbb"></div>
<div class="pill" style="left:570px;top:35.5px;width:15px;height:7.5px;line-height:7.5px;padding-left:10px;font-size:4px;color:#bbb">10</div>
<div class="a" style="left:570px;top:35.5px;width:8px;height:7.5px;background:#1b63d0;border-radius:4px 0 0 4px"></div>
<div class="a" style="left:572px;top:37.2px;width:4px;height:4px;border:0.7px solid #ddd"></div>
<div class="pill" style="left:587px;top:35.5px;width:18px;height:7.5px;line-height:7.5px;padding-left:10.5px;font-size:4px;color:#bbb">10°</div>
<div class="a" style="left:587px;top:35.5px;width:8.5px;height:7.5px;background:#1b63d0;border-radius:4px 0 0 4px"></div>
<svg class="a" style="left:589px;top:37px" width="5" height="5"><path d="M0.5 4.5H4.5L2.5 0.5Z" fill="none" stroke="#ddd" stroke-width="0.6"/></svg>
<div class="pill" style="left:607px;top:35.5px;width:21px;height:7.5px;line-height:7.5px;padding-left:10px;font-size:4px;color:#bbb">0.25</div>
<div class="a" style="left:607px;top:35.5px;width:8px;height:7.5px;background:#1b63d0;border-radius:4px 0 0 4px"></div>
<svg class="a" style="left:609px;top:37px" width="5" height="5"><path d="M0.5 4.5L4.5 0.5" stroke="#ddd" stroke-width="0.8"/></svg>
<div class="pill" style="left:628.5px;top:35.5px;width:19.5px;height:7.5px;line-height:7.5px;padding-left:13px;font-size:4px;color:#bbb">1</div>
<div class="a" style="left:631.5px;top:37.5px;width:5px;height:3.5px;border:0.7px solid #bbb;border-radius:0.5px"></div>
<div class="pill" style="left:648.5px;top:35.5px;width:7px;height:7.5px"></div>
<!-- streaming disabled -->
<div class="a" style="left:604px;top:429px;width:48px;height:8px;background:rgba(40,36,34,0.85);border-radius:1.5px"></div>
<svg class="a" style="left:607px;top:431px" width="5" height="4.5"><polygon points="2.5,0.3 4.8,4.2 0.2,4.2" fill="none" stroke="#e8553f" stroke-width="0.7"/></svg>
<div class="t" style="left:614px;top:431.5px;font-size:4.2px;color:#e07a6a">Streaming Disabled</div>

<!-- ===== right panel ===== -->
<div class="a" style="left:654px;top:33px;width:146px;height:407px;background:#151515"></div>
<div class="a" style="left:655px;top:33px;width:51px;height:10px;background:#242424"></div>
<div class="a" style="left:658px;top:35px;width:4px;height:5px;border:0.8px solid #bbb"></div>
<div class="t" style="left:664px;top:35.5px;font-size:4.8px;color:#ccc">Outliner</div>
<div class="t" style="left:700px;top:35.5px;font-size:4.8px;color:#ccc">×</div>
<div class="a" style="left:709px;top:35px;width:5px;height:5px;border-radius:50%;background:#bbb"></div>
<div class="t" style="left:716px;top:35.5px;font-size:4.8px;color:#ccc">Place Actors</div>
<div class="a" style="left:655px;top:43px;width:145px;height:117px;background:#1a1a1a"></div>
<svg class="a" style="left:660px;top:45.5px" width="10" height="6"><path d="M0.5 1H5M1.3 2.5H4.2M2 4H3.5" stroke="#bbb" stroke-width="0.8"/><path d="M6.5 2.2L7.8 3.5L9.1 2.2" stroke="#bbb" stroke-width="0.6" fill="none"/></svg>
<div class="a" style="left:672.5px;top:45px;width:122px;height:6.5px;background:#0d0d0d;border-radius:3.2px"></div>
<svg class="a" style="left:674px;top:45.6px" width="6" height="6"><circle cx="2.6" cy="2.6" r="1.8" fill="none" stroke="#ccc" stroke-width="0.7"/><path d="M3.9 3.9L5.3 5.3" stroke="#ccc" stroke-width="0.8"/></svg>
<div class="t" style="left:681px;top:46.3px;font-size:4.5px;color:#4a4a4a">Search...</div>
<svg class="a" style="left:788.5px;top:46.8px" width="5" height="4"><path d="M0.5 0.8L2.5 2.8L4.5 0.8" stroke="#ccc" stroke-width="0.7" fill="none"/></svg>
<div class="a" style="left:797px;top:45px;width:3px;height:6px;background:#777"></div>
<div class="a" style="left:655.5px;top:54px;width:32px;height:6px;background:#232323;border-radius:1px"></div>
<div class="t" style="left:658.5px;top:55px;font-size:4px;color:#aaa">Uncontrolled</div>
<div class="a" style="left:689px;top:54px;width:23.5px;height:6px;background:#232323;border-radius:1px"></div>
<div class="t" style="left:694px;top:55px;font-size:4px;color:#aaa">Unsaved</div>
<div class="a" style="left:655px;top:62.5px;width:145px;height:7.5px;background:#272727"></div>
<div class="a" style="left:680px;top:62.5px;width:1px;height:7.5px;background:#333"></div>
<div class="a" style="left:773px;top:62.5px;width:1px;height:7.5px;background:#333"></div>
<div class="a" style="left:658.5px;top:64.5px;width:4px;height:3px;border-radius:50%;background:#777"></div>
<div class="a" style="left:666px;top:65px;width:2.5px;height:2.5px;background:#888"></div>
<div class="a" style="left:674px;top:64px;width:1.5px;height:4px;background:#888"></div>
<div class="t" style="left:681px;top:64.5px;font-size:4.8px;color:#ccc">Item Label ▴</div>
<div class="t" style="left:775px;top:64.5px;font-size:4.8px;color:#ccc">Type</div>

<svg class="a" style="left:682.5px;top:73.30px" width="4" height="3"><polygon points="0.3,0.3 3.7,0.3 2,2.6" fill="#bbb"/></svg>
<svg class="a" style="left:687px;top:72.30px" width="5" height="4"><polygon points="2.5,0 5,4 0,4" fill="#ccc"/></svg>
<div class="ot" style="left:693px;top:71.30px">FirstPersonMap (Editor)</div>
<div class="ty" style="top:71.30px">World</div>
<div class="a" style="left:655px;top:77.55px;width:145px;height:6.5px;background:#171717"></div>
<svg class="a" style="left:685.5px;top:79.80px" width="4" height="3"><polygon points="0.3,0.3 3.7,0.3 2,2.6" fill="#bbb"/></svg>
<div class="a" style="left:689.5px;top:79.10px;width:5.5px;height:4px;background:#8a3a30;border:0.6px solid #d0a890;border-radius:0.5px"></div>
<div class="ot" style="left:697px;top:77.80px">05_ExampleProblemAssets</div>
<div class="ty" style="top:77.80px">Folder</div>
<svg class="a" style="left:694.4px;top:85.20px" width="5" height="5"><circle cx="2.5" cy="2.5" r="1.9" fill="none" stroke="#b8b8b8" stroke-width="0.7"/><path d="M1.2 3.2Q2.5 1.2 3.8 2" stroke="#b8b8b8" stroke-width="0.5" fill="none"/></svg>
<div class="ot" style="left:700.6px;top:84.30px">SM_Cube_NoMaterial</div>
<div class="ty" style="top:84.30px">StaticMeshActor</div>
<div class="a" style="left:655px;top:90.55px;width:145px;height:6.5px;background:#171717"></div>
<svg class="a" style="left:694.4px;top:91.70px" width="5" height="5"><circle cx="2.5" cy="2.5" r="1.9" fill="none" stroke="#b8b8b8" stroke-width="0.7"/><path d="M1.2 3.2Q2.5 1.2 3.8 2" stroke="#b8b8b8" stroke-width="0.5" fill="none"/></svg>
<div class="ot" style="left:700.6px;top:90.80px">SM_WithMissingMaterial</div>
<div class="ty" style="top:90.80px">StaticMeshActor</div>
<svg class="a" style="left:694.4px;top:98.20px" width="5" height="5"><circle cx="2.5" cy="2.5" r="1.9" fill="none" stroke="#b8b8b8" stroke-width="0.7"/><path d="M1.2 3.2Q2.5 1.2 3.8 2" stroke="#b8b8b8" stroke-width="0.5" fill="none"/></svg>
<div class="ot" style="left:700.6px;top:97.30px">SM_WithNoMeshSet</div>
<div class="ty" style="top:97.30px">StaticMeshActor</div>
<div class="a" style="left:655px;top:103.55px;width:145px;height:6.5px;background:#171717"></div>
<svg class="a" style="left:694.4px;top:104.70px" width="5" height="5"><circle cx="2.5" cy="2.5" r="1.9" fill="none" stroke="#b8b8b8" stroke-width="0.7"/><path d="M1.2 3.2Q2.5 1.2 3.8 2" stroke="#b8b8b8" stroke-width="0.5" fill="none"/></svg>
<div class="ot" style="left:700.6px;top:103.80px">SM_WithNoMeshSet2</div>
<div class="ty" style="top:103.80px">StaticMeshActor</div>
<svg class="a" style="left:685.5px;top:112.30px" width="4" height="3"><polygon points="0.3,0.3 3.7,0.3 2,2.6" fill="#bbb"/></svg>
<div class="a" style="left:689.5px;top:111.60px;width:5.5px;height:4px;background:#8a3a30;border:0.6px solid #d0a890;border-radius:0.5px"></div>
<div class="ot" style="left:697px;top:110.30px">Block01</div>
<div class="ty" style="top:110.30px">Folder</div>
<div class="a" style="left:655px;top:116.55px;width:145px;height:6.5px;background:#171717"></div>
<svg class="a" style="left:694.4px;top:117.70px" width="5" height="5"><circle cx="2.5" cy="2.5" r="1.9" fill="none" stroke="#b8b8b8" stroke-width="0.7"/><path d="M1.2 3.2Q2.5 1.2 3.8 2" stroke="#b8b8b8" stroke-width="0.5" fill="none"/></svg>
<div class="ot" style="left:700.6px;top:116.80px">SM_Cube4</div>
<div class="ty" style="top:116.80px">StaticMeshActor</div>
<svg class="a" style="left:694.4px;top:124.20px" width="5" height="5"><circle cx="2.5" cy="2.5" r="1.9" fill="none" stroke="#b8b8b8" stroke-width="0.7"/><path d="M1.2 3.2Q2.5 1.2 3.8 2" stroke="#b8b8b8" stroke-width="0.5" fill="none"/></svg>
<div class="ot" style="left:700.6px;top:123.30px">SM_Cube7</div>
<div class="ty" style="top:123.30px">StaticMeshActor</div>
<div class="a" style="left:655px;top:129.55px;width:145px;height:6.5px;background:#171717"></div>
<svg class="a" style="left:694.4px;top:130.70px" width="5" height="5"><circle cx="2.5" cy="2.5" r="1.9" fill="none" stroke="#b8b8b8" stroke-width="0.7"/><path d="M1.2 3.2Q2.5 1.2 3.8 2" stroke="#b8b8b8" stroke-width="0.5" fill="none"/></svg>
<div class="ot" style="left:700.6px;top:129.80px">SM_Cube9</div>
<div class="ty" style="top:129.80px">StaticMeshActor</div>
<svg class="a" style="left:694.4px;top:137.20px" width="5" height="5"><circle cx="2.5" cy="2.5" r="1.9" fill="none" stroke="#b8b8b8" stroke-width="0.7"/><path d="M1.2 3.2Q2.5 1.2 3.8 2" stroke="#b8b8b8" stroke-width="0.5" fill="none"/></svg>
<div class="ot" style="left:700.6px;top:136.30px">SM_Cube10</div>
<div class="ty" style="top:136.30px">StaticMeshActor</div>
<div class="a" style="left:655px;top:142.55px;width:145px;height:6.5px;background:#171717"></div>
<svg class="a" style="left:694.4px;top:143.70px" width="5" height="5"><circle cx="2.5" cy="2.5" r="1.9" fill="none" stroke="#b8b8b8" stroke-width="0.7"/><path d="M1.2 3.2Q2.5 1.2 3.8 2" stroke="#b8b8b8" stroke-width="0.5" fill="none"/></svg>
<div class="ot" style="left:700.6px;top:142.80px">SM_Ramp2</div>
<div class="ty" style="top:142.80px">StaticMeshActor</div>
<svg class="a" style="left:694.4px;top:150.20px" width="5" height="5"><circle cx="2.5" cy="2.5" r="1.9" fill="none" stroke="#b8b8b8" stroke-width="0.7"/><path d="M1.2 3.2Q2.5 1.2 3.8 2" stroke="#b8b8b8" stroke-width="0.5" fill="none"/></svg>
<div class="ot" style="left:700.6px;top:149.30px">SM_Ramp3</div>
<div class="ty" style="top:149.30px">StaticMeshActor</div>
<div class="a" style="left:655px;top:155.55px;width:145px;height:6.5px;background:#171717"></div>
<svg class="a" style="left:685.5px;top:157.80px" width="4" height="3"><polygon points="0.3,0.3 3.7,0.3 2,2.6" fill="#bbb"/></svg>
<div class="a" style="left:689.5px;top:157.10px;width:5.5px;height:4px;background:#8a3a30;border:0.6px solid #d0a890;border-radius:0.5px"></div>
<div class="ot" style="left:697px;top:155.80px">Block02</div>
<div class="ty" style="top:155.80px">Folder</div>
<div class="a" style="left:655px;top:158.8px;width:145px;height:10.2px;background:#232323"></div>
<div class="t" style="left:660px;top:161.6px;font-size:4.6px;color:#bbb">3,570 actors (3,570 loaded)</div>
<div class="a" style="left:655px;top:169px;width:145px;height:271px;background:#181818"></div>
<div class="a" style="left:655px;top:169px;width:145px;height:9px;background:#131313"></div>
<div class="a" style="left:655px;top:169px;width:51px;height:9px;background:#242424"></div>
<div class="t" style="left:658px;top:172px;font-size:5px;color:#ccc">✎</div>
<div class="t" style="left:664px;top:172.3px;font-size:4.8px;color:#ccc">Details</div>
<div class="t" style="left:700px;top:172.3px;font-size:4.8px;color:#ccc">×</div>
<div class="a" style="left:709.5px;top:172px;width:4.5px;height:4.5px;border-radius:50%;background:#aaa"></div>
<div class="t" style="left:716px;top:172.3px;font-size:4.8px;color:#ccc">World Settings</div>
<div class="a" style="left:762px;top:172px;width:4px;height:4.5px;background:#aaa"></div>
<div class="t" style="left:769px;top:172.3px;font-size:4.8px;color:#ccc">World Partition</div>
<div class="t" style="left:711px;top:188.5px;font-size:4.2px;color:#6a6a6a">Select an object to view details.</div>
<div class="a" style="left:0;top:439.5px;width:800px;height:10.5px;background:#1c1c1c"></div>
<div class="a" style="left:0;top:439.5px;width:800px;height:1px;background:#101010"></div>
<div class="t" style="left:-2px;top:443.6px;font-size:4.7px;color:#bbb;transform:scaleX(.88);transform-origin:0 50%">Content Drawer</div>
<div class="a" style="left:29px;top:440.5px;width:0.8px;height:9.5px;background:#0e0e0e"></div>
<div class="a" style="left:33px;top:443px;width:4px;height:5px;border:0.7px solid #bbb"></div>
<div class="t" style="left:39px;top:443.6px;font-size:4.7px;color:#bbb;transform:scaleX(.88);transform-origin:0 50%">Output Log</div>
<div class="a" style="left:63px;top:440.5px;width:0.8px;height:9.5px;background:#0e0e0e"></div>
<div class="a" style="left:67.5px;top:443.5px;width:5px;height:4px;border:0.7px solid #bbb"></div>
<div class="t" style="left:75px;top:443.6px;font-size:4.7px;color:#bbb;transform:scaleX(.88);transform-origin:0 50%">Cmd</div><svg class="a" style="left:85px;top:445px" width="4" height="3"><path d="M0.4 0.6L2 2.2L3.6 0.6" stroke="#bbb" stroke-width="0.6" fill="none"/></svg>
<div class="a" style="left:93px;top:441.5px;width:96px;height:7px;background:#0f0f0f;border-radius:1px"></div>
<div class="t" style="left:95px;top:444.3px;font-size:4.2px;color:#555;font-family:'Liberation Mono',monospace">Enter Console Command</div>
<div class="a" style="left:636px;top:443px;width:4px;height:5px;border:0.7px solid #aaa;border-radius:50%"></div>
<div class="t" style="left:642px;top:443.6px;font-size:4.7px;color:#bbb;transform:scaleX(.88);transform-origin:0 50%">Trace</div><svg class="a" style="left:655px;top:445px" width="4" height="3"><path d="M0.4 0.6L2 2.2L3.6 0.6" stroke="#bbb" stroke-width="0.6" fill="none"/></svg>
<div class="a" style="left:664px;top:443.5px;width:4px;height:4px;border-radius:50%;background:#999"></div>
<div class="a" style="left:671px;top:443px;width:4px;height:5px;border:0.7px solid #aaa"></div>
<div class="a" style="left:682px;top:443px;width:4px;height:5px;border:0.7px solid #aaa"></div>
<div class="t" style="left:689px;top:443.6px;font-size:4.7px;color:#bbb;transform:scaleX(.88);transform-origin:0 50%">Derived Data</div>
<svg class="a" style="left:719px;top:445px" width="4" height="3"><path d="M0.4 0.6L2 2.2L3.6 0.6" stroke="#bbb" stroke-width="0.6" fill="none"/></svg>
<div class="a" style="left:736px;top:443px;width:4px;height:5px;border:0.7px solid #aaa"></div>
<div class="t" style="left:742px;top:443.6px;font-size:4.7px;color:#bbb;transform:scaleX(.88);transform-origin:0 50%">All Saved</div>
<div class="a" style="left:769px;top:443px;width:4px;height:5px;border:0.7px solid #aaa"></div>
<div class="t" style="left:775px;top:443.6px;font-size:4.7px;color:#bbb;transform:scaleX(.88);transform-origin:0 50%">Revision Control</div>

<div class="a" style="left:247.00px;top:24.30px;width:254.50px;height:406.20px;background:#151515;border-radius:1.5px 1.5px 0 0"></div>
<div class="a" style="left:249.50px;top:26.00px;width:7.00px;height:7.00px;background:#1c1c1c;border-radius:50%;border:0.8px solid #555"></div>
<div class="a" style="left:259.40px;top:27.80px;width:50.00px;height:7.80px;background:#1f1f1f;border-radius:1px 1px 0 0"></div>
<div class="t" style="left:268.00px;top:29.93px;font-size:4.60px;color:#ccc;transform:scaleX(0.87);transform-origin:0 50%;text-shadow:0 0 0.3px #ccc;">EUW Level Opti...</div>
<div class="t" style="left:302.50px;top:29.70px;font-size:5.00px;color:#bbb;transform:scaleX(1);transform-origin:0 50%;text-shadow:0 0 0.3px #bbb;">×</div>
<div class="a" style="left:465.50px;top:29.80px;width:3.30px;height:0.70px;background:#ccc;"></div>
<div class="a" style="left:478.80px;top:28.30px;width:3.60px;height:3.60px;background:transparent;border:0.7px solid #ccc;border-radius:0.5px"></div>
<svg class="a" style="left:492px;top:28px" width="4" height="4"><path d="M0.3 0.3L3.7 3.7M3.7 0.3L0.3 3.7" stroke="#ccc" stroke-width="0.7"/></svg>
<div class="a" style="left:496.00px;top:35.60px;width:3.20px;height:389.60px;background:#f2f2f2;"></div>
<div class="a" style="left:249.00px;top:35.60px;width:246.50px;height:32.00px;background:#10263d;"></div>
<svg class="a" style="left:252px;top:38.5px" width="15" height="15" viewBox="0 0 15 15">
<path d="M1 1.2H8.5L13.6 6.3V13.8H6.2L1 8.6Z" fill="none" stroke="#e6e9ee" stroke-width="1"/>
<circle cx="10.2" cy="7.6" r="1.7" fill="#e6e9ee"/><circle cx="7.6" cy="10.6" r="1.7" fill="#e6e9ee"/><circle cx="10.6" cy="11" r="1.5" fill="#e6e9ee"/>
</svg>
<div class="t" style="left:269.40px;top:40.48px;font-size:11.25px;color:#f4f4f4;transform:scaleX(0.87);transform-origin:0 50%;font-weight:bold;">LEVEL OPTIMISE TOOL</div>
<div class="t" style="left:381.70px;top:42.92px;font-size:7.20px;color:#e6e6e6;transform:scaleX(0.87);transform-origin:0 50%;text-shadow:0 0 0.3px #e6e6e6;font-style:italic;">( V 1.0 )</div>
<div class="a" style="left:269.50px;top:52.10px;width:136.00px;height:0.80px;background:#d8dce2;"></div>
<div class="a" style="left:446.60px;top:41.00px;width:45.50px;height:10.00px;background:#e2473c;border-radius:2.5px"></div>
<div class="t" style="left:319.35px;top:43.60px;width:300.00px;text-align:center;font-size:5.69px;color:#fff;font-weight:bold;"><span style="display:inline-block;transform:scaleX(0.87);transform-origin:50% 50%">Documentation</span></div>
<div class="t" style="left:269.60px;top:56.42px;font-size:4.79px;color:#e4e6ea;transform:scaleX(0.87);transform-origin:0 50%;text-shadow:0 0 0.3px #e4e6ea;">These scripts log level actors that might be worth looking into for potential bugs and optimisations.</div>
<div class="t" style="left:269.60px;top:62.12px;font-size:4.79px;color:#e4e6ea;transform:scaleX(0.87);transform-origin:0 50%;text-shadow:0 0 0.3px #e4e6ea;">No assets are edited, only loaded and read to make the logs.</div>
<div class="a" style="left:249.00px;top:67.60px;width:246.50px;height:13.10px;background:#1c1c1c;"></div>
<div class="t" style="left:252.80px;top:73.78px;font-size:5.90px;color:#e8e8e8;transform:scaleX(0.87);transform-origin:0 50%;text-shadow:0 0 0.3px #e8e8e8;"><b>Helpers :</b> Quick access to viewmodes, tools and commands</div>
<div class="a" style="left:249.00px;top:80.70px;width:246.50px;height:10.60px;background:#10263d;"></div>
<svg class="a" style="left:328.5px;top:84px" width="5" height="4"><polygon points="2.5,0 5,4 0,4" fill="#9aa6b4"/></svg>
<svg class="a" style="left:410.5px;top:84px" width="5" height="4"><polygon points="2.5,0 5,4 0,4" fill="#9aa6b4"/></svg>
<div class="a" style="left:339.70px;top:81.40px;width:65.00px;height:9.20px;background:#e2473c;border-radius:2.5px"></div>
<div class="t" style="left:222.20px;top:83.71px;width:300.00px;text-align:center;font-size:5.50px;color:#fff;font-weight:bold;"><span style="display:inline-block;transform:scaleX(0.87);transform-origin:50% 50%">Show Helpers Section</span></div>
<div class="a" style="left:249.00px;top:96.00px;width:246.50px;height:14.20px;background:#1c1c1c;"></div>
<div class="t" style="left:253.00px;top:99.39px;font-size:9.50px;color:#fff;transform:scaleX(0.87);transform-origin:0 50%;font-weight:bold;">Step 1 :</div>
<div class="t" style="left:284.90px;top:101.35px;font-size:7.15px;color:#e8e8e8;transform:scaleX(0.87);transform-origin:0 50%;text-shadow:0 0 0.3px #e8e8e8;">Pick what to check</div>
<div class="a" style="left:249.00px;top:110.20px;width:246.50px;height:37.30px;background:#10263d;"></div>
<div class="a" style="left:253.60px;top:112.80px;width:118.40px;height:12.70px;background:#e2473c;"></div>
<div class="t" style="left:162.80px;top:115.25px;width:300.00px;text-align:center;font-size:8.36px;color:#fff;font-weight:bold;"><span style="display:inline-block;transform:scaleX(0.87);transform-origin:50% 50%">Check Current Level</span></div>
<div class="a" style="left:373.00px;top:112.80px;width:119.50px;height:12.70px;background:#7a363a;"></div>
<div class="t" style="left:282.75px;top:115.25px;width:300.00px;text-align:center;font-size:8.36px;color:#c6a2a4;font-weight:bold;"><span style="display:inline-block;transform:scaleX(0.87);transform-origin:50% 50%">Check Selected Actors</span></div>
<div class="a" style="left:253.60px;top:127.30px;width:238.90px;height:17.90px;background:#0f2a45;border:0.7px solid #7b8da4"></div>
<div class="t" style="left:260.30px;top:130.76px;font-size:6.10px;color:#eef0f3;transform:scaleX(0.84);transform-origin:0 50%;text-shadow:0 0 0.3px #eef0f3;">- This mode will search the entire level. If you have a complex level this may take time.</div>
<div class="t" style="left:260.30px;top:136.76px;font-size:6.10px;color:#eef0f3;transform:scaleX(0.84);transform-origin:0 50%;text-shadow:0 0 0.3px #eef0f3;">- Level instances cannot be checked unless they are currently open ('Ctrl' + 'E').</div>
<div class="a" style="left:249.00px;top:151.00px;width:246.50px;height:15.80px;background:#1c1c1c;"></div>
<div class="t" style="left:253.00px;top:155.89px;font-size:9.50px;color:#fff;transform:scaleX(0.87);transform-origin:0 50%;font-weight:bold;">Step 2 :</div>
<div class="t" style="left:284.90px;top:157.85px;font-size:7.15px;color:#e8e8e8;transform:scaleX(0.87);transform-origin:0 50%;text-shadow:0 0 0.3px #e8e8e8;">Pick what you want to look into</div>
<div class="a" style="left:249.00px;top:166.80px;width:246.50px;height:16.30px;background:#10263d;"></div>
<div class="a" style="left:253.30px;top:169.10px;width:78.70px;height:12.40px;background:#7a363a;"></div>
<div class="t" style="left:142.65px;top:171.33px;width:300.00px;text-align:center;font-size:8.40px;color:#c6a2a4;font-weight:bold;"><span style="display:inline-block;transform:scaleX(0.87);transform-origin:50% 50%">Health Check</span></div>
<div class="a" style="left:333.10px;top:169.10px;width:79.20px;height:12.40px;background:#e2473c;"></div>
<div class="t" style="left:222.70px;top:171.33px;width:300.00px;text-align:center;font-size:8.40px;color:#fff;font-weight:bold;"><span style="display:inline-block;transform:scaleX(0.87);transform-origin:50% 50%">Optimisations</span></div>
<div class="a" style="left:413.50px;top:169.10px;width:78.80px;height:12.40px;background:#7a363a;"></div>
<div class="t" style="left:302.90px;top:171.33px;width:300.00px;text-align:center;font-size:8.40px;color:#c6a2a4;font-weight:bold;"><span style="display:inline-block;transform:scaleX(0.87);transform-origin:50% 50%">Bugs</span></div>
<div class="a" style="left:249.00px;top:188.00px;width:246.50px;height:15.30px;background:#1c1c1c;"></div>
<div class="t" style="left:253.00px;top:191.69px;font-size:9.50px;color:#fff;transform:scaleX(0.87);transform-origin:0 50%;font-weight:bold;">Step 3 :</div>
<div class="t" style="left:284.90px;top:193.65px;font-size:7.15px;color:#e8e8e8;transform:scaleX(0.87);transform-origin:0 50%;text-shadow:0 0 0.3px #e8e8e8;">For what actor type</div>
<div class="a" style="left:249.00px;top:203.30px;width:246.50px;height:184.30px;background:#10263d;"></div>
<div class="a" style="left:253.30px;top:205.70px;width:78.70px;height:10.60px;background:#7a363a;"></div>
<div class="t" style="left:142.65px;top:207.09px;width:300.00px;text-align:center;font-size:8.30px;color:#c6a2a4;font-weight:bold;"><span style="display:inline-block;transform:scaleX(0.87);transform-origin:50% 50%">Static Meshes</span></div>
<div class="a" style="left:333.10px;top:205.70px;width:79.20px;height:10.60px;background:#e2473c;"></div>
<div class="t" style="left:222.70px;top:207.09px;width:300.00px;text-align:center;font-size:8.30px;color:#fff;font-weight:bold;"><span style="display:inline-block;transform:scaleX(0.87);transform-origin:50% 50%">Skeletal Meshes</span></div>
<div class="a" style="left:413.50px;top:205.70px;width:78.80px;height:10.60px;background:#7a363a;"></div>
<div class="t" style="left:302.90px;top:207.09px;width:300.00px;text-align:center;font-size:8.30px;color:#c6a2a4;font-weight:bold;"><span style="display:inline-block;transform:scaleX(0.87);transform-origin:50% 50%">Audio</span></div>
<div class="a" style="left:253.30px;top:218.10px;width:78.70px;height:10.60px;background:#7a363a;"></div>
<div class="t" style="left:142.65px;top:219.49px;width:300.00px;text-align:center;font-size:8.30px;color:#c6a2a4;font-weight:bold;"><span style="display:inline-block;transform:scaleX(0.87);transform-origin:50% 50%">VFX</span></div>
<div class="a" style="left:333.10px;top:218.10px;width:79.20px;height:10.60px;background:#7a363a;"></div>
<div class="t" style="left:222.70px;top:219.49px;width:300.00px;text-align:center;font-size:8.30px;color:#c6a2a4;font-weight:bold;"><span style="display:inline-block;transform:scaleX(0.87);transform-origin:50% 50%">Foliage</span></div>
<div class="a" style="left:413.50px;top:218.10px;width:78.80px;height:10.60px;background:#7a363a;"></div>
<div class="t" style="left:302.90px;top:219.49px;width:300.00px;text-align:center;font-size:8.30px;color:#c6a2a4;font-weight:bold;"><span style="display:inline-block;transform:scaleX(0.87);transform-origin:50% 50%">Decals</span></div>
<div class="a" style="left:253.30px;top:230.30px;width:78.70px;height:10.30px;background:#7a363a;"></div>
<div class="t" style="left:142.65px;top:231.54px;width:300.00px;text-align:center;font-size:8.30px;color:#c6a2a4;font-weight:bold;"><span style="display:inline-block;transform:scaleX(0.87);transform-origin:50% 50%">Text Render</span></div>
<div class="a" style="left:333.10px;top:230.30px;width:79.20px;height:10.30px;background:#8d99a6;border-bottom:0.6px dotted #9fc080"></div>
<div class="t" style="left:222.70px;top:231.54px;width:300.00px;text-align:center;font-size:8.30px;color:#3c4652;font-weight:bold;"><span style="display:inline-block;transform:scaleX(0.87);transform-origin:50% 50%">Lights</span></div>
<div class="a" style="left:413.50px;top:230.30px;width:78.80px;height:10.30px;background:#7a363a;"></div>
<div class="t" style="left:302.90px;top:231.54px;width:300.00px;text-align:center;font-size:8.30px;color:#c6a2a4;font-weight:bold;"><span style="display:inline-block;transform:scaleX(0.87);transform-origin:50% 50%">Volumes</span></div>
<div class="a" style="left:253.30px;top:242.70px;width:78.70px;height:10.10px;background:#7a363a;"></div>
<div class="t" style="left:142.65px;top:243.84px;width:300.00px;text-align:center;font-size:8.30px;color:#c6a2a4;font-weight:bold;"><span style="display:inline-block;transform:scaleX(0.87);transform-origin:50% 50%">Blueprints</span></div>
<div class="a" style="left:333.10px;top:242.70px;width:79.20px;height:10.10px;background:#7a363a;"></div>
<div class="t" style="left:222.70px;top:243.84px;width:300.00px;text-align:center;font-size:8.30px;color:#c6a2a4;font-weight:bold;"><span style="display:inline-block;transform:scaleX(0.87);transform-origin:50% 50%">Misc</span></div>
<svg class="a" style="left:343px;top:231.5px" width="4" height="5"><polygon points="0.3,0.3 0.3,4.2 1.3,3.2 2.2,4.8 3,4.4 2.1,2.9 3.6,2.9" fill="#f4f4f4" stroke="#333" stroke-width="0.3"/></svg>
<div class="a" style="left:252.60px;top:254.60px;width:240.10px;height:130.90px;background:transparent;border:0.7px solid #7d8fa6"></div>
<div class="t" style="left:298.50px;top:259.84px;font-size:6.83px;color:#fff;transform:scaleX(0.87);transform-origin:0 50%;font-weight:bold;text-shadow:0 0 0.3px #fff;">OPTIMISATIONS : Skeletal Meshes : FirstPersonMap</div>
<div class="a" style="left:298.40px;top:265.80px;width:147.90px;height:0.70px;background:#d8dce2;"></div>
<div class="a" style="left:256.10px;top:269.10px;width:100.70px;height:15.70px;background:#e04a3f;border-radius:2.5px;outline:0.6px dashed rgba(255,190,180,0.35);outline-offset:-1px"></div>
<div class="t" style="left:156.45px;top:273.62px;width:300.00px;text-align:center;font-size:7.30px;color:#fff;font-weight:bold;"><span style="display:inline-block;transform:scaleX(0.87);transform-origin:50% 50%">No LODs</span></div>
<div class="t" style="left:362.80px;top:272.85px;font-size:4.83px;color:#f0f2f5;transform:scaleX(0.87);transform-origin:0 50%;text-shadow:0 0 0.35px #fff">Search for skeletal mesh actors without any Levels Of Detail</div>
<div class="t" style="left:362.80px;top:278.05px;font-size:4.83px;color:#f0f2f5;transform:scaleX(0.87);transform-origin:0 50%;text-shadow:0 0 0.35px #fff">(LODs)</div>
<div class="a" style="left:256.10px;top:288.90px;width:100.70px;height:15.70px;background:#e04a3f;border-radius:2.5px;outline:0.6px dashed rgba(255,190,180,0.35);outline-offset:-1px"></div>
<div class="t" style="left:156.45px;top:293.42px;width:300.00px;text-align:center;font-size:7.30px;color:#fff;font-weight:bold;"><span style="display:inline-block;transform:scaleX(0.87);transform-origin:50% 50%">No Max Draw Distance</span></div>
<div class="t" style="left:362.80px;top:292.65px;font-size:4.83px;color:#f0f2f5;transform:scaleX(0.87);transform-origin:0 50%;text-shadow:0 0 0.35px #fff">Search for skeletal mesh actors that have no max draw distance</div>
<div class="t" style="left:362.80px;top:297.85px;font-size:4.83px;color:#f0f2f5;transform:scaleX(0.87);transform-origin:0 50%;text-shadow:0 0 0.35px #fff">set</div>
<div class="a" style="left:256.10px;top:308.40px;width:100.70px;height:15.70px;background:#e04a3f;border-radius:2.5px;outline:0.6px dashed rgba(255,190,180,0.35);outline-offset:-1px"></div>
<div class="t" style="left:156.45px;top:312.92px;width:300.00px;text-align:center;font-size:7.30px;color:#fff;font-weight:bold;"><span style="display:inline-block;transform:scaleX(0.87);transform-origin:50% 50%">Edited Lighting Channels</span></div>
<div class="t" style="left:362.80px;top:312.15px;font-size:4.83px;color:#f0f2f5;transform:scaleX(0.87);transform-origin:0 50%;text-shadow:0 0 0.35px #fff">Search for skeletal mesh actors that have non-default lighting</div>
<div class="t" style="left:362.80px;top:317.35px;font-size:4.83px;color:#f0f2f5;transform:scaleX(0.87);transform-origin:0 50%;text-shadow:0 0 0.35px #fff">channels set (default is: 0 = True | 1 = False | 2 = False)</div>
<div class="a" style="left:256.10px;top:327.80px;width:100.70px;height:15.70px;background:#e04a3f;border-radius:2.5px;outline:0.6px dashed rgba(255,190,180,0.35);outline-offset:-1px"></div>
<div class="t" style="left:161.70px;top:332.36px;width:300.00px;text-align:center;font-size:7.23px;color:#fff;font-weight:bold;"><span style="display:inline-block;transform:scaleX(0.87);transform-origin:50% 50%">Cast Shadow ENABLED</span></div>
<div class="a" style="left:261.30px;top:330.15px;width:11.00px;height:11.00px;background:transparent;border:0.6px dashed #f3c0b8"></div>
<div class="a" style="left:263.30px;top:332.15px;width:7.00px;height:7.00px;background:transparent;border:1px solid #fff"></div>
<div class="a" style="left:265.30px;top:334.15px;width:3.00px;height:3.00px;background:#fff;"></div>
<div class="t" style="left:362.80px;top:331.55px;font-size:4.83px;color:#f0f2f5;transform:scaleX(0.87);transform-origin:0 50%;text-shadow:0 0 0.35px #fff">Search for skeletal mesh actors with cast shadows enabled/</div>
<div class="t" style="left:362.80px;top:336.75px;font-size:4.83px;color:#f0f2f5;transform:scaleX(0.87);transform-origin:0 50%;text-shadow:0 0 0.35px #fff">disabled</div>
<div class="a" style="left:256.10px;top:347.10px;width:100.70px;height:15.70px;background:#e04a3f;border-radius:2.5px;outline:0.6px dashed rgba(255,190,180,0.35);outline-offset:-1px"></div>
<div class="t" style="left:162.40px;top:352.45px;width:300.00px;text-align:center;font-size:5.86px;color:#fff;font-weight:bold;"><span style="display:inline-block;transform:scaleX(0.87);transform-origin:50% 50%">Custom Depth Pass ENABLED</span></div>
<div class="a" style="left:261.30px;top:349.45px;width:11.00px;height:11.00px;background:transparent;border:0.6px dashed #f3c0b8"></div>
<div class="a" style="left:263.30px;top:351.45px;width:7.00px;height:7.00px;background:transparent;border:1px solid #fff"></div>
<div class="a" style="left:265.30px;top:353.45px;width:3.00px;height:3.00px;background:#fff;"></div>
<div class="t" style="left:362.80px;top:350.85px;font-size:4.83px;color:#f0f2f5;transform:scaleX(0.87);transform-origin:0 50%;text-shadow:0 0 0.35px #fff">Search for skeletal mesh actors that have 'Render Custom Depth</div>
<div class="t" style="left:362.80px;top:356.05px;font-size:4.83px;color:#f0f2f5;transform:scaleX(0.87);transform-origin:0 50%;text-shadow:0 0 0.35px #fff">pass' enabled/disabled</div>
<div class="a" style="left:256.10px;top:366.20px;width:100.70px;height:15.70px;background:#e04a3f;border-radius:2.5px;outline:0.6px dashed rgba(255,190,180,0.35);outline-offset:-1px"></div>
<div class="t" style="left:156.45px;top:370.97px;width:300.00px;text-align:center;font-size:6.86px;color:#fff;font-weight:bold;"><span style="display:inline-block;transform:scaleX(0.87);transform-origin:50% 50%">Same Material In Multiple Slots</span></div>
<div class="t" style="left:362.80px;top:369.95px;font-size:4.83px;color:#f0f2f5;transform:scaleX(0.87);transform-origin:0 50%;text-shadow:0 0 0.35px #fff">Search for skeletal mesh actors that have the same material</div>
<div class="t" style="left:362.80px;top:375.15px;font-size:4.83px;color:#f0f2f5;transform:scaleX(0.87);transform-origin:0 50%;text-shadow:0 0 0.35px #fff">plugged into multiple slots</div>
<div class="a" style="left:249.00px;top:395.10px;width:246.50px;height:14.00px;background:#1c1c1c;"></div>
<div class="t" style="left:253.00px;top:397.49px;font-size:9.50px;color:#fff;transform:scaleX(0.87);transform-origin:0 50%;font-weight:bold;">Step 4 :</div>
<div class="t" style="left:284.90px;top:399.45px;font-size:7.15px;color:#e8e8e8;transform:scaleX(0.87);transform-origin:0 50%;text-shadow:0 0 0.3px #e8e8e8;">Review Actors</div>
<div class="a" style="left:249.00px;top:409.10px;width:246.50px;height:21.10px;background:#10263d;"></div>
<div class="a" style="left:252.80px;top:410.90px;width:239.90px;height:21.10px;background:transparent;border:0.7px solid #7d8fa6;border-bottom:none"></div>
<div class="t" style="left:222.75px;top:417.20px;width:300.00px;text-align:center;font-size:7.24px;color:#e8ecf0;"><span style="display:inline-block;transform:scaleX(0.87);transform-origin:50% 50%">... use buttons above to search for potential issues ...</span></div>
</body></html>
